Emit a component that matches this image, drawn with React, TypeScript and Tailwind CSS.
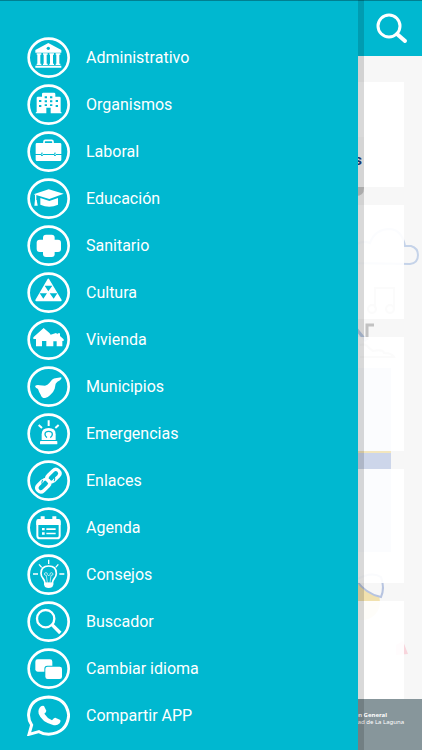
import type { ReactNode } from "react";

const CYAN = "#00b8d0";

type MenuItem = { label: string; icon: ReactNode; bubble?: boolean };

const items: MenuItem[] = [
  {
    label: "Administrativo",
    icon: (
      <>
        <path d="M64 18 103 39v8H25v-8Z" />
        <circle cx="64" cy="34" r="5" fill={CYAN} />
        <path d="M29 49h14v4H29zM48 49h14v4H48zM67 49h14v4H67zM86 49h14v4H86zM31 53h9v28h-9zM50 53h9v28h-9zM69 53h9v28h-9zM88 53h9v28h-9zM29 80h14v4H29zM48 80h14v4H48zM67 80h14v4H67zM86 80h14v4H86zM25 86h78v6H25z" />
      </>
    ),
  },
  {
    label: "Organismos",
    icon: (
      <>
        <path d="M49 26h32q4 0 4 4v8h12q4 0 4 4v42q3 0 3 4H71V71H58v17H26q0-4 3-4V42q0-4 4-4h12v-8q0-4 4-4Z" />
        <path
          fill={CYAN}
          d="M53 37h7v6h-7zM69 37h7v6h-7zM36 48h7v6h-7zM53 49h7v6h-7zM69 49h7v6h-7zM86 48h7v6h-7zM36 63h7v6h-7zM53 61h7v5h-7zM69 61h7v5h-7zM86 63h7v6h-7z"
        />
      </>
    ),
  },
  {
    label: "Laboral",
    icon: (
      <>
        <path d="M51 38v-6q0-4 4-4h19q4 0 4 4v6" fill="none" stroke="white" strokeWidth="5" />
        <path d="M30 36h69q4 0 4 4v29H26V40q0-4 4-4ZM26 72h77v14q0 4-4 4H30q-4 0-4-4Z" />
        <path fill={CYAN} d="M42 65h6v10h-6zM81 65h6v10h-6z" />
        <path d="M44 67h3v6h-3zM83 67h3v6h-3z" />
      </>
    ),
  },
  {
    label: "Educación",
    icon: (
      <>
        <path d="M20 49 65 34l45 13-43 16Z" />
        <path d="M40 60 67 69l26-9v20q-26 12-53 0Z" />
        <path d="M26 50v19" stroke="white" strokeWidth="4" />
        <path d="M24 66h5l3 17H22Z" />
      </>
    ),
  },
  {
    label: "Sanitario",
    icon: (
      <>
        <rect x="48" y="29" width="35" height="67" rx="9" />
        <rect x="29" y="44" width="73" height="37" rx="9" />
      </>
    ),
  },
  {
    label: "Cultura",
    icon: (
      <>
        <path d="M64 23 101 85H28Z" stroke="white" strokeWidth="6" strokeLinejoin="round" />
        <path fill={CYAN} d="M53 41h23L64 58ZM38 64h22L49 80ZM68 64h23L80 80Z" />
      </>
    ),
  },
  {
    label: "Vivienda",
    icon: (
      <path d="M50 27 68 43 71 47 87 42l5 4v-3h7v8l11 10v5h-4v16H89V67H79v15H58V66H45v16H27V60h-8v-5Z" />
    ),
  },
  {
    label: "Municipios",
    icon: (
      <path d="M24 60q6-4 14-2l16 1q8-1 13-8l8-10q5-5 14-5l14-2q2 4-4 9-9 4-13 10l-3 15q-4 12-14 20-9 9-16 8-9 0-12-10-6-10-8-17-8-3-9-9Z" />
    ),
  },
  {
    label: "Emergencias",
    icon: (
      <>
        <path d="M44 81V64q0-19 21-19t21 19v17Z" />
        <path d="M60 74q-6-4-6-10 0-9 11-9t11 9q0 6-6 10" fill="none" stroke={CYAN} strokeWidth="4" />
        <rect x="39" y="84" width="52" height="10" rx="2" />
        <path d="M65 22v17M35 36l10 9M95 36l-10 9" fill="none" stroke="white" strokeWidth="6" />
      </>
    ),
  },
  {
    label: "Enlaces",
    icon: (
      <g transform="rotate(-44 64 62)" fill="none" stroke="white" strokeWidth="10">
        <path d="M50 50H33q-12 0-12 12t12 12h20q12 0 12-12" strokeLinecap="round" />
        <path d="M77 74h18q12 0 12-12T95 50H75q-12 0-12 12" strokeLinecap="round" />
        <path d="M43 62q0-13 14-13M85 62q0 13-14 13" stroke={CYAN} strokeWidth="3" />
        <path d="M53 50q9 0 12 9M75 74q-9 0-12-9" strokeWidth="8" />
      </g>
    ),
  },
  {
    label: "Agenda",
    icon: (
      <>
        <rect x="31" y="39" width="67" height="55" rx="8" fill="none" stroke="white" strokeWidth="6" />
        <path d="M28 54V42q0-6 6-6h61q6 0 6 6v12Z" />
        <path d="M41 28h12v12H41zM76 28h12v12H76z" />
        <path d="M45 63h8v7h-8zM58 64h28v5H58zM45 76h8v7h-8zM58 77h28v5H58z" />
      </>
    ),
  },
  {
    label: "Consejos",
    icon: (
      <>
        <path
          d="M54 88q0-8-6-15-6-6-6-15 0-22 23-22t23 22q0 9-6 15-6 7-6 15Z"
          fill="none"
          stroke="white"
          strokeWidth="5"
        />
        <path d="M51 86h28v6l-3 7q-11 6-22 0l-3-7Z" />
        <path
          d="M61 86 58 64q-6 0-6-4t5-4 4 5l4 5 4-5q0-5 4-5t5 4-6 4l-3 22"
          fill="none"
          stroke="white"
          strokeWidth="2"
        />
        <path
          d="M65 17v13M36 31l8 9M94 31l-8 9M18 60h15M97 60h15"
          fill="none"
          stroke="white"
          strokeWidth="4"
        />
      </>
    ),
  },
  {
    label: "Buscador",
    icon: (
      <g fill="none" stroke="white">
        <circle cx="56" cy="53" r="26" strokeWidth="7" />
        <path d="m75 71 25 25" strokeWidth="10" />
      </g>
    ),
  },
  {
    label: "Cambiar idioma",
    icon: (
      <>
        <rect x="25" y="34" width="51" height="37" rx="7" />
        <rect x="52" y="53" width="54" height="41" rx="9" fill={CYAN} />
        <rect x="55" y="56" width="50" height="37" rx="7" />
      </>
    ),
  },
  {
    label: "Compartir APP",
    bubble: true,
    icon: (
      <>
        <path
          d="M6 118 14 90Q3 73 5 56 10 9 65 6q54 3 60 55-4 52-60 57-16 0-29-8Z"
          fill="none"
          stroke="white"
          strokeWidth="9"
        />
        <path d="M42 34q5-3 9-1l7 14q0 4-6 9 9 14 23 20 6-9 10-8l15 7q2 4-2 10-9 9-22 4Q44 80 35 56q-3-14 7-22Z" />
      </>
    ),
  },
];

function BackgroundArt() {
  return (
    <svg
      className="absolute top-0 right-0"
      width="122"
      height="699"
      viewBox="300 0 122 699"
      fill="none"
      aria-hidden="true"
    >
      <path d="M300 137h64v51q0 8-8 8h-56Z" fill="#c9c9c9" />
      <path
        d="M350 263v-12q8-12 20-8 5-14 20-14 12 1 15 17h6q7 2 7 9 0 8-8 9Z"
        stroke="#c5d3e9"
        strokeWidth="2"
      />
      <g stroke="#c5c5c5" strokeWidth="2">
        <path d="M375 308v-20h19v20" />
        <circle cx="372" cy="309" r="4" />
        <circle cx="390" cy="309" r="4" />
        <path d="M360 345q6-2 9 3l4 3q10-2 11 2 8 0 10 4H360" />
      </g>
      <path d="M367 340v-15h7" stroke="#c2c2c2" strokeWidth="3" />
      <path d="m354 326 12 15" stroke="#b9c9e3" strokeWidth="3" />
      <path d="M300 368h91v184h-91Z" fill="#cdd6ea" />
      <path d="M300 451h91v2h-91Z" fill="#f3e6bd" />
      <circle cx="362" cy="602" r="18" fill="#f1e1ae" />
      <path d="M356 580q10 14 25 17 4-9 0-20-10-6-25 3Z" fill="#f7f7f7" stroke="#b7c4e0" strokeWidth="2" />
      <path d="m396 645 7-4 5 13-12 1Z" fill="#f8d5dc" />
    </svg>
  );
}

function Card({ children }: { children?: ReactNode }) {
  return <article className="relative h-[114px] bg-white/92 first:h-[105px]">{children}</article>;
}

export default function App() {
  return (
    <div className="relative flex min-h-screen flex-col overflow-hidden bg-[#f7f7f7] font-['Roboto',sans-serif]">
      <BackgroundArt />
      <header className="relative flex h-14 items-center justify-end bg-[#00b8d0] px-[14px]">
        <button type="button" aria-label="Buscar">
          <svg className="block h-8 w-8" viewBox="0 0 32 32" fill="none" stroke="white">
            <circle cx="13" cy="14" r="11" strokeWidth="3" />
            <path d="m21 22 8 7" strokeWidth="4" strokeLinecap="round" />
          </svg>
        </button>
      </header>

      <main className="h-0 grow overflow-hidden px-[18px] pt-[26px]">
        <div className="ml-auto flex w-1/2 flex-col gap-[18px]">
          <Card>
            <h2 className="pt-[68px] pr-[42px] text-right text-[15px] leading-5 font-bold text-[#1d4080]">
              Cursos
            </h2>
          </Card>
          <Card />
          <Card />
          <Card />
          <Card />
        </div>
      </main>

      <footer className="relative flex h-[51px] justify-end bg-[#87969b] px-[18px] pt-[13px] font-['Noto_Sans',sans-serif] text-[6px] leading-[7px] text-white">
        <p>
          <strong className="block">Fundación General</strong>
          <span className="block">Universidad de La Laguna</span>
        </p>
      </footer>

      <div className="absolute inset-y-0 left-0 flex w-[calc(100%-58px)]">
        <nav aria-label="Menú principal" className="grow bg-[#00b8d0] pt-[34px]">
          <ul>
            {items.map(({ label, icon, bubble }) => (
              <li key={label}>
                <a
                  href="#"
                  className="flex h-[47px] items-center gap-4 pl-[27px] text-base leading-5 text-white"
                >
                  <svg className="h-[41px] w-[43px] shrink-0" viewBox="0 0 129 123" fill="white" aria-hidden="true">
                    {!bubble && (
                      <ellipse cx="65" cy="62" rx="60" ry="57" fill="none" stroke="white" strokeWidth="8" />
                    )}
                    {icon}
                  </svg>
                  {label}
                </a>
              </li>
            ))}
          </ul>
        </nav>
        <div className="w-[6px] bg-black/15" />
      </div>
      <div className="absolute inset-x-0 top-0 h-px bg-black/30" />
    </div>
  );
}
